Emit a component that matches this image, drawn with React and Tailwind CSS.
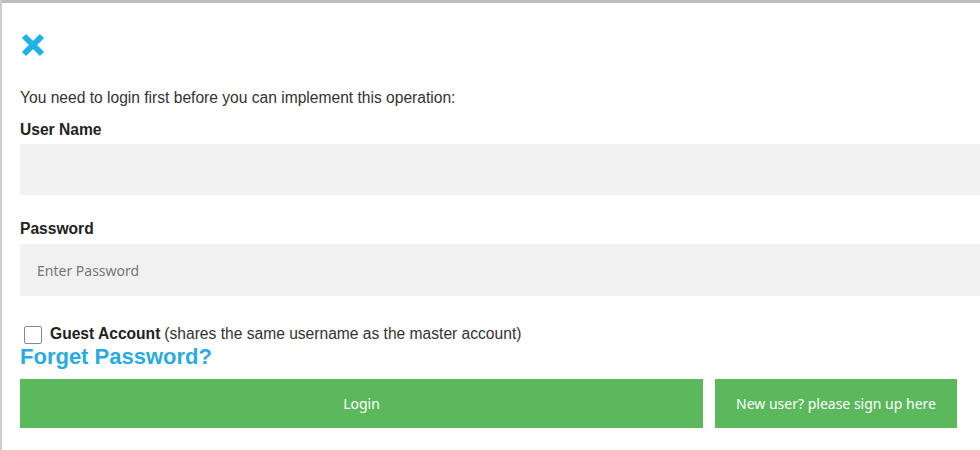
import React from "react";

const CloseIcon = () => (
  <svg width="24" height="24" viewBox="0 0 24 24" className="block">
    <path d="M3 3 L21 21 M21 3 L3 21" stroke="#1db3ea" strokeWidth="6" strokeLinecap="butt" />
  </svg>
);

export default function App() {
  return (
    <div className="w-[980px] h-[450px] overflow-hidden bg-white border-l-2 border-[#c9cfc9]">
      {/* page behind the modal peeks out at the top */}
      <div className="h-[3px] bg-[#bdbdbd]" />

      <div className="w-[1040px] pl-[18px] pt-[30px] font-['Liberation_Sans',Arial,sans-serif] text-[#333]">
        <button className="block ml-[1px]">
          <CloseIcon />
        </button>

        <p className="mt-[31px] text-[15.6px] leading-5 text-[#333]">
          You need to login first before you can implement this operation:
        </p>

        <label className="block mt-3 text-[15.6px] leading-5 font-bold text-[#222]">User Name</label>
        <input
          type="text"
          className="block mt-[4px] w-full h-[51px] bg-[#f1f1f1] px-4 outline-none"
        />

        <label className="block mt-[24px] text-[15.6px] leading-5 font-bold text-[#222]">Password</label>
        <input
          type="password"
          placeholder="Enter Password"
          className="block mt-[5px] w-full h-[52px] bg-[#f1f1f1] px-[17px] text-[14px] font-['Noto_Sans',sans-serif] placeholder:text-[#777] outline-none"
        />

        <div className="mt-[29px] flex items-end h-5 text-[15.6px]">
          <span className="ml-1 mb-[1px] w-[18px] h-[18px] border border-[#8a8a8a] rounded-[2px] bg-white" />
          <span className="ml-[8px] font-bold text-[#222]">Guest Account</span>
          <span className="ml-1 text-[#333]">(shares the same username as the master account)</span>
        </div>

        <a className="block mt-0 text-[22px] leading-6 font-bold text-[#29abe2]">Forget Password?</a>

        <div className="mt-[10px] flex gap-3">
          <button className="w-[683px] h-[49px] bg-[#5cb85c] text-white text-[14px] font-['Noto_Sans',sans-serif]">
            Login
          </button>
          <button className="w-[242px] h-[49px] bg-[#5cb85c] text-white text-[14px] font-['Noto_Sans',sans-serif]">
            New user? please sign up here
          </button>
        </div>
      </div>
    </div>
  );
}
